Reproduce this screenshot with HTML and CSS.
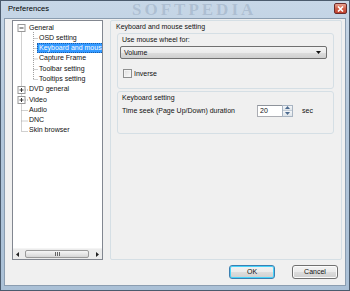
FILE: index.html
```html
<!DOCTYPE html>
<html lang="en">

<head>
    <meta charset="UTF-8">
    <title>Preferences</title>
    <link rel="stylesheet" href="styles.css">
</head>

<body>
    <div class="window">
        <div class="titlebar">
            <span class="title">Preferences</span>
            <span class="wm-title">SOFTPEDIA</span>
            <div class="close">
                <svg width="7" height="6" viewBox="0 0 7 6"><path d="M1 0.5 L6 5.5 M6 0.5 L1 5.5" stroke="#fff" stroke-width="1.6"/></svg>
            </div>
        </div>

        <div class="client">
            <div class="main">
                <!-- tree -->
                <div class="tree">
                    <div class="nodes">
                        <svg class="lines" width="91" height="120" viewBox="0 0 91 120">
                            <g stroke="#a0a0a0" stroke-width="1" fill="none" stroke-dasharray="1 1">
                                <path d="M9.5 10.5 V110.5 H16"/>
                                <path d="M21.5 11 V58.5"/>
                                <path d="M21.5 17.5 H26 M21.5 27.5 H26 M21.5 38 H26 M21.5 48.5 H26 M21.5 58.5 H26"/>
                                <path d="M13 69 H16 M13 79 H16 M9.5 89.5 H16 M9.5 100 H16"/>
                            </g>
                            <g fill="#fff" stroke="#989898">
                                <rect x="6" y="3.5" width="7" height="7" />
                                <rect x="6" y="65.5" width="7" height="7" />
                                <rect x="6" y="75.5" width="7" height="7" />
                            </g>
                            <g stroke="#3a3a3a" stroke-width="1">
                                <path d="M7.5 7 H11.5"/>
                                <path d="M7.5 69 H11.5 M9.5 67 V71"/>
                                <path d="M7.5 79 H11.5 M9.5 77 V81"/>
                            </g>
                        </svg>
                        <div class="node top">General</div>
                        <div class="node child">OSD setting</div>
                        <div class="node child"><span class="selected">Keyboard and mouse setting</span></div>
                        <div class="node child">Capture Frame</div>
                        <div class="node child">Toolbar setting</div>
                        <div class="node child">Tooltips setting</div>
                        <div class="node top">DVD general</div>
                        <div class="node top">Video</div>
                        <div class="node top">Audio</div>
                        <div class="node top">DNC</div>
                        <div class="node top">Skin browser</div>
                    </div>
                    <div class="hscroll">
                        <div class="arrow">
                            <svg width="4" height="5" viewBox="0 0 4 5"><path d="M3 0 L0 2.5 L3 5 Z" fill="#222"/></svg>
                        </div>
                        <div class="track">
                            <div class="thumb"><span class="grip"></span></div>
                        </div>
                        <div class="arrow">
                            <svg width="4" height="5" viewBox="0 0 4 5"><path d="M1 0 L4 2.5 L1 5 Z" fill="#222"/></svg>
                        </div>
                    </div>
                </div>

                <!-- settings -->
                <div class="panel">
                    <div class="label">Keyboard and mouse setting</div>

                    <div class="group wheel">
                        <div class="label">Use mouse wheel for:</div>
                        <div class="combo">
                            <span>Volume</span>
                            <svg width="5" height="3" viewBox="0 0 5 3"><path d="M0 0 H5 L2.5 3 Z" fill="#111"/></svg>
                        </div>
                        <div class="check-row">
                            <span class="checkbox"></span>
                            <span>Inverse</span>
                        </div>
                    </div>

                    <div class="group keys">
                        <div class="label">Keyboard setting</div>
                        <div class="seek-row">
                            <span class="seek-text">Time seek (Page Up/Down) duration</span>
                            <div class="spin">
                                <span class="spin-input">20</span>
                                <div class="spin-btns">
                                    <div class="spin-btn"><svg width="5" height="3" viewBox="0 0 5 3"><path d="M0 3 H5 L2.5 0 Z" fill="#4d6b8f"/></svg></div>
                                    <div class="spin-btn"><svg width="5" height="3" viewBox="0 0 5 3"><path d="M0 0 H5 L2.5 3 Z" fill="#4d6b8f"/></svg></div>
                                </div>
                            </div>
                            <span class="unit">sec</span>
                        </div>
                    </div>
                </div>
            </div>

            <div class="buttons">
                <div class="btn default">OK</div>
                <div class="btn">Cancel</div>
            </div>
        </div>
    </div>
</body>

</html>
```

FILE: styles.css
```css
* {
    box-sizing: border-box;
}

body {
    margin: 0;
    padding: 0;
    font-family: "Liberation Sans", Arial, sans-serif;
    font-size: 7px;
    color: #111;
}

.window {
    width: 350px;
    height: 291px;
    border: 1px solid #4b5b6d;
    background: linear-gradient(to bottom, #c7d7e7, #b3c7db 40%, #aac0d6);
    padding: 0 3px 4px 3px;
    display: flex;
    flex-direction: column;
}

/* title bar */
.titlebar {
    height: 17px;
    position: relative;
    display: flex;
    align-items: center;
    padding-left: 4px;
}

.title {
    font-size: 7.6px;
    color: #000;
    margin-top: -2px;
}

.wm-title {
    position: absolute;
    left: 128px;
    top: -1px;
    font-family: "Liberation Serif", serif;
    font-size: 17px;
    font-weight: bold;
    letter-spacing: 3px;
    color: rgba(70, 95, 125, 0.2);
}

.close {
    position: absolute;
    right: -1px;
    top: 2px;
    width: 13px;
    height: 11px;
    border: 1px solid #6b2a2a;
    border-radius: 2px;
    background: linear-gradient(to bottom, #e8a493, #d0604a 50%, #c0402c);
    display: flex;
    align-items: center;
    justify-content: center;
}

/* client */
.client {
    flex: 1;
    background-color: #f0f0f0;
    border: 1px solid #8b9db0;
    display: flex;
    flex-direction: column;
}

.main {
    display: flex;
    gap: 7px;
    height: 240px;
    margin: 1px 3px 0 7px;
}

/* tree */
.tree {
    width: 91px;
    border: 1px solid #828790;
    background-color: #fff;
    display: flex;
    flex-direction: column;
    overflow: hidden;
}

.nodes {
    flex: 1;
    position: relative;
    padding-top: 1.5px;
}

.lines {
    position: absolute;
    left: -1px;
    top: -0.5px;
}

.node {
    height: 10.3px;
    line-height: 10.3px;
    white-space: nowrap;
    position: relative;
}

.node.top {
    padding-left: 16px;
}

.node.child {
    padding-left: 26px;
}

.selected {
    display: inline-block;
    background-color: #3399ff;
    color: #fff;
    padding: 0 2px;
    margin-left: -2px;
    outline: 1px dotted #1c5da8;
    outline-offset: -1px;
}

.hscroll {
    height: 11px;
    display: flex;
    background-color: #ececec;
    border-top: 1px solid #f4f4f4;
}

.arrow {
    width: 10px;
    display: flex;
    align-items: center;
    justify-content: center;
}

.track {
    flex: 1;
    padding: 1px 2px 1px 2px;
}

.thumb {
    width: 64px;
    height: 100%;
    border: 1px solid #9a9a9a;
    border-radius: 2px;
    background: linear-gradient(to bottom, #f6f6f6, #e6e6e6 50%, #d6d6d6);
    display: flex;
    align-items: center;
    justify-content: center;
}

.grip {
    width: 5px;
    height: 4px;
    background: repeating-linear-gradient(to right, #666 0 1px, transparent 1px 2px);
}

/* settings panel */
.panel {
    width: 232px;
    border: 1px solid #d5dfe5;
    border-radius: 2px;
    padding: 0 8px 0 5px;
    display: flex;
    flex-direction: column;
}

.label {
    height: 9px;
    line-height: 9px;
    margin-top: 0.5px;
}

.group {
    margin-left: 1px;
    width: 217px;
    border: 1px solid #d5dfe5;
    border-radius: 3px;
    padding: 0 5px 0 4px;
    display: flex;
    flex-direction: column;
}

.group .label {
    margin-top: 1.5px;
}

.wheel {
    margin-top: 2px;
    height: 56px;
}

.combo {
    margin: 1.5px 0 0 -2px;
    width: 207px;
    height: 13px;
    border: 1px solid #707070;
    border-radius: 2px;
    background: linear-gradient(to bottom, #f3f3f3, #ebebeb 50%, #dddddd 51%, #cfcfcf);
    display: flex;
    align-items: center;
    justify-content: space-between;
    padding: 0 5px 0 3px;
}

.check-row {
    margin-top: 10px;
    display: flex;
    align-items: center;
    gap: 2px;
    padding-left: 1px;
}

.checkbox {
    width: 9px;
    height: 9px;
    border: 1px solid #8e8f8f;
    background: linear-gradient(135deg, #dcdcdc, #fdfdfd);
    box-shadow: inset 0 0 0 1px #f4f4f4;
}

.keys {
    margin-top: 2px;
    height: 43px;
}

.seek-row {
    margin-top: 2.5px;
    display: flex;
    align-items: center;
}

.seek-text {
    width: 135px;
}

.spin {
    display: flex;
    height: 12px;
}

.spin-input {
    width: 25px;
    border: 1px solid #abadb3;
    border-top-color: #8e939b;
    border-right: none;
    background-color: #fff;
    line-height: 10px;
    padding-left: 2px;
}

.spin-btns {
    width: 11px;
    display: flex;
    flex-direction: column;
    border: 1px solid #a8b4c2;
}

.spin-btn {
    flex: 1;
    display: flex;
    align-items: center;
    justify-content: center;
    background: linear-gradient(to bottom, #f4f6f8, #dfe5ea);
}

.spin-btn + .spin-btn {
    border-top: 1px solid #c3cdd7;
}

.unit {
    margin-left: 9px;
}

/* buttons */
.buttons {
    display: flex;
    justify-content: flex-end;
    gap: 17px;
    margin: 5px 7px 0 0;
}

.btn {
    width: 46px;
    height: 14px;
    border: 1px solid #707070;
    border-radius: 3px;
    background: linear-gradient(to bottom, #f2f2f2, #ebebeb 50%, #dddddd 51%, #cfcfcf);
    box-shadow: inset 0 0 0 1px #fbfbfb;
    text-align: center;
    line-height: 12px;
}

.btn.default {
    border-color: #3c7fb1;
    box-shadow: inset 0 0 0 1px #48d3fb;
}
```
